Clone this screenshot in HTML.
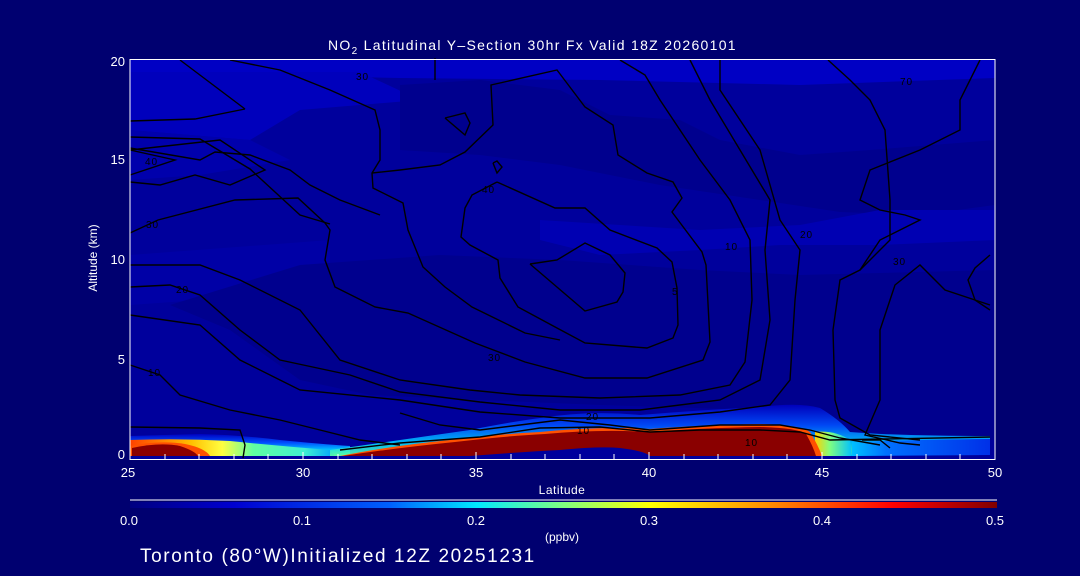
<!DOCTYPE html>
<html><head><style>
html,body{margin:0;padding:0;background:#000070;width:1080px;height:576px;overflow:hidden}
svg{display:block}
text{font-family:"Liberation Sans",sans-serif;fill:#fff}
</style></head><body>
<svg width="1080" height="576" viewBox="0 0 1080 576">
<defs>
<linearGradient id="jet" x1="0" x2="1" y1="0" y2="0">
<stop offset="0" stop-color="#000080"/>
<stop offset="0.12" stop-color="#0000d0"/>
<stop offset="0.3" stop-color="#0060ff"/>
<stop offset="0.4" stop-color="#00e8ff"/>
<stop offset="0.5" stop-color="#80ff80"/>
<stop offset="0.6" stop-color="#ffff00"/>
<stop offset="0.75" stop-color="#ff8000"/>
<stop offset="0.88" stop-color="#ff0000"/>
<stop offset="1" stop-color="#800000"/>
</linearGradient>
<linearGradient id="halo" x1="0" x2="0" y1="0" y2="1">
<stop offset="0" stop-color="#0000c0"/>
<stop offset="0.4" stop-color="#0050ff"/>
<stop offset="0.75" stop-color="#00d0ff"/>
<stop offset="1" stop-color="#60ffa0"/>
</linearGradient>
<linearGradient id="lefth" x1="0" x2="1" y1="0" y2="0">
<stop offset="0" stop-color="#ff4000"/>
<stop offset="0.3" stop-color="#ffc000"/>
<stop offset="0.45" stop-color="#ffff40"/>
<stop offset="0.6" stop-color="#60ffa0"/>
<stop offset="0.85" stop-color="#40f0d0"/>
<stop offset="1" stop-color="#00a0ff"/>
</linearGradient>
<linearGradient id="righth" x1="0" x2="1" y1="0" y2="0">
<stop offset="0" stop-color="#00c0ff"/>
<stop offset="0.25" stop-color="#0070ff"/>
<stop offset="1" stop-color="#0030e8"/>
</linearGradient>
<linearGradient id="wedge" x1="0" x2="1" y1="0" y2="0">
<stop offset="0" stop-color="#ffd000"/>
<stop offset="0.4" stop-color="#80ff80"/>
<stop offset="1" stop-color="#00c0ff"/>
</linearGradient>
</defs>
<rect x="130" y="60" width="865" height="399" fill="#00009c"/>
<polygon points="130,60 995,60 995,78 800,85 600,80 400,78 130,72" fill="#0000c4"/>
<polygon points="130,72 360,72 420,100 300,110 250,140 130,130" fill="#0000bc"/>
<polygon points="130,130 250,140 290,160 200,175 130,180" fill="#0000ac"/>
<polygon points="400,85 480,80 560,90 610,115 680,120 720,140 800,155 870,150 995,140 995,205 920,215 840,212 760,200 660,185 560,165 480,155 400,150" fill="#00008e"/>
<polygon points="540,220 620,225 700,230 800,225 880,210 995,210 995,240 880,245 780,245 700,250 600,255 540,240" fill="#0000b2"/>
<polygon points="130,255 330,240 330,280 300,300 250,310 200,300 130,305" fill="#0000a6"/>
<polygon points="170,305 300,265 440,255 560,260 700,270 800,275 995,270 995,440 850,440 760,410 600,405 480,400 370,395 300,380 230,330" fill="#00008e"/>
<!-- left plume -->
<path d="M130,436 L200,434 Q240,435 280,440 Q320,444 350,446 L350,456 L130,456 Z" fill="url(#halo)"/>
<path d="M130,440 Q180,438 230,441 Q280,446 330,450 L335,456 L130,456 Z" fill="url(#lefth)"/>
<path d="M130,446 Q160,440 185,444 Q205,448 210,456 L130,456 Z" fill="#ff5000"/>
<path d="M132,448 Q160,442 180,446 Q195,451 198,456 L132,456 Z" fill="#8a0000"/>
<!-- main plume halo -->
<path d="M330,450 Q400,440 470,430 Q510,422 540,418 Q590,410 640,415 Q700,410 760,407 Q800,402 820,408 Q840,420 850,432 Q900,436 990,436 L990,455 L330,456 Z" fill="url(#halo)" opacity="0.9"/>
<path d="M815,432 Q835,430 850,440 L852,456 L815,456 Z" fill="url(#wedge)"/>
<path d="M852,442 Q900,440 990,439 L990,455 L852,456 Z" fill="url(#righth)"/>
<path d="M340,456 Q390,446 450,440 Q500,434 540,432 Q600,426 650,429 Q700,425 760,424 Q800,425 810,432 Q818,445 822,456 Z" fill="#ff5000"/>
<path d="M343,456 Q395,448 455,442 Q505,436 545,434 Q600,429 650,432 Q700,428 760,427 Q798,428 806,434 Q813,446 816,456 Z" fill="#8a0000"/>
<path d="M470,456 Q520,452 560,450 Q600,446 620,448 Q645,451 650,456 Z" fill="#00009c"/>
<!-- contours -->
<g fill="none" stroke="#000" stroke-width="1.4">
<polyline points="130,121 195,119 245,109"/>
<polyline points="180,60 245,109"/>
<polyline points="130,137 200,139 250,169 300,215 330,224"/>
<polyline points="130,148 200,160 215,152 250,155 290,170 310,185 340,200 380,215"/>
<polyline points="130,182 160,185 195,175 230,185 265,170 220,140 130,150"/>
<polyline points="130,175 175,160 130,150"/>
<polyline points="230,60 280,70 330,90 375,110 380,130 380,160 372,173 373,188 403,203 408,230 423,267 445,287 472,307 525,333 560,340"/>
<polyline points="435,58 435,80"/>
<polyline points="130,233 158,220 235,200 298,198 325,223 330,230 325,260 335,287 375,307 408,313 475,343 525,362 585,378 647,378 703,360 710,342 706,265 702,252 672,212 682,198 673,182 647,173 618,155 613,125 585,107 557,70 491,85 493,125 465,152 440,165 400,170 372,173"/>
<polyline points="497,182 555,208 585,208 610,230 657,248 672,262 677,288 678,325 673,338 647,348 585,343 557,328 518,307 500,278 498,260 470,245 461,237 465,208 472,195 497,182"/>
<polyline points="530,264 557,260 585,243 610,255 625,273 623,292 617,302 585,311 530,264"/>
<polyline points="445,118 465,113 470,123 465,135 445,118"/>
<polyline points="493,163 497,161 502,167 497,173 493,163"/>
<polyline points="130,265 200,265 240,280 300,310 340,360 400,380 470,390 520,395 600,398 680,395 730,385 745,362 752,300 750,240 730,200 700,160 660,100 645,75 620,60"/>
<polyline points="130,287 170,285 200,295 240,330 280,360 350,375 400,392 480,402 560,410 640,410 720,400 760,380 770,320 765,250 770,200 740,150 710,100 690,60"/>
<polyline points="130,315 200,325 240,360 300,390 400,400 480,412 560,418 650,418 720,412 770,405 790,380 795,300 800,250 780,220 760,150 720,90 720,60"/>
<polyline points="130,365 160,375 180,395 230,410 280,420 320,430 360,440 400,445"/>
<polyline points="130,427 200,428 240,430 245,445 243,458"/>
<polyline points="400,413 440,425 480,430 520,425 560,420 610,425 650,430 720,425 780,425 810,430 840,438 880,445"/>
<polyline points="340,450 400,443 480,437 540,428 600,427 650,432 700,430 760,430 800,432 830,440 990,437"/>
<polyline points="828,60 850,80 870,100 885,130 890,200 890,240 860,270 840,280 833,330 835,400 840,418 870,435 920,440"/>
<polyline points="980,60 960,100 960,130 920,150 870,170 860,200 880,210 905,215 920,220 900,230 880,240 860,270"/>
<polyline points="990,255 975,268 968,280 975,300 990,305"/>
<polyline points="990,310 975,300 945,290 920,265 895,285 880,330 880,400 865,435 900,443 920,445"/>
<polyline points="862,440 880,440 890,448"/>
</g>
<g font-size="10" fill="#000" letter-spacing="1">
<text x="356" y="80" style="fill:#000">30</text>
<text x="145" y="165" style="fill:#000">40</text>
<text x="146" y="228" style="fill:#000">30</text>
<text x="176" y="293" style="fill:#000">20</text>
<text x="148" y="376" style="fill:#000">10</text>
<text x="482" y="193" style="fill:#000">40</text>
<text x="488" y="361" style="fill:#000">30</text>
<text x="672" y="295" style="fill:#000">5</text>
<text x="725" y="250" style="fill:#000">10</text>
<text x="800" y="238" style="fill:#000">20</text>
<text x="893" y="265" style="fill:#000">30</text>
<text x="900" y="85" style="fill:#000">70</text>
<text x="586" y="420" style="fill:#000">20</text>
<text x="577" y="434" style="fill:#000">10</text>
<text x="745" y="446" style="fill:#000">10</text>
</g>
<rect x="130" y="59.5" width="865" height="400" fill="none" stroke="#fff" stroke-width="1"/>
<g stroke="#fff" stroke-width="1">
<line x1="165" y1="459" x2="165" y2="454"/><line x1="199" y1="459" x2="199" y2="454"/><line x1="234" y1="459" x2="234" y2="454"/><line x1="268" y1="459" x2="268" y2="454"/>
<line x1="303" y1="459" x2="303" y2="452"/>
<line x1="338" y1="459" x2="338" y2="454"/><line x1="372" y1="459" x2="372" y2="454"/><line x1="407" y1="459" x2="407" y2="454"/><line x1="441" y1="459" x2="441" y2="454"/>
<line x1="476" y1="459" x2="476" y2="452"/>
<line x1="511" y1="459" x2="511" y2="454"/><line x1="545" y1="459" x2="545" y2="454"/><line x1="580" y1="459" x2="580" y2="454"/><line x1="614" y1="459" x2="614" y2="454"/>
<line x1="649" y1="459" x2="649" y2="452"/>
<line x1="684" y1="459" x2="684" y2="454"/><line x1="718" y1="459" x2="718" y2="454"/><line x1="753" y1="459" x2="753" y2="454"/><line x1="787" y1="459" x2="787" y2="454"/>
<line x1="822" y1="459" x2="822" y2="452"/>
<line x1="857" y1="459" x2="857" y2="454"/><line x1="891" y1="459" x2="891" y2="454"/><line x1="926" y1="459" x2="926" y2="454"/><line x1="960" y1="459" x2="960" y2="454"/>
</g>
<g font-size="13">
<text x="128" y="477" text-anchor="middle">25</text>
<text x="303" y="477" text-anchor="middle">30</text>
<text x="476" y="477" text-anchor="middle">35</text>
<text x="649" y="477" text-anchor="middle">40</text>
<text x="822" y="477" text-anchor="middle">45</text>
<text x="995" y="477" text-anchor="middle">50</text>
<text x="125" y="459" text-anchor="end">0</text>
<text x="125" y="364" text-anchor="end">5</text>
<text x="125" y="264" text-anchor="end">10</text>
<text x="125" y="164" text-anchor="end">15</text>
<text x="125" y="66" text-anchor="end">20</text>
</g>
<text x="562" y="494" font-size="12" text-anchor="middle" letter-spacing="0.5">Latitude</text>
<text transform="translate(97,258) rotate(-90)" font-size="12" text-anchor="middle">Altitude (km)</text>
<text x="328" y="50" font-size="14" letter-spacing="1.3">NO<tspan font-size="10" dy="4">2</tspan><tspan dy="-4"> Latitudinal Y–Section 30hr  Fx Valid 18Z 20260101</tspan></text>
<line x1="130" y1="500" x2="997" y2="500" stroke="#fff" stroke-width="1"/>
<rect x="130" y="502" width="867" height="6" fill="url(#jet)"/>
<g font-size="13">
<text x="129" y="525" text-anchor="middle">0.0</text>
<text x="302" y="525" text-anchor="middle">0.1</text>
<text x="476" y="525" text-anchor="middle">0.2</text>
<text x="649" y="525" text-anchor="middle">0.3</text>
<text x="822" y="525" text-anchor="middle">0.4</text>
<text x="995" y="525" text-anchor="middle">0.5</text>
</g>
<text x="562" y="541" font-size="12" text-anchor="middle">(ppbv)</text>
<text x="140" y="562" font-size="19" letter-spacing="1.6">Toronto (80°W)Initialized 12Z 20251231</text>
</svg>
</body></html>
